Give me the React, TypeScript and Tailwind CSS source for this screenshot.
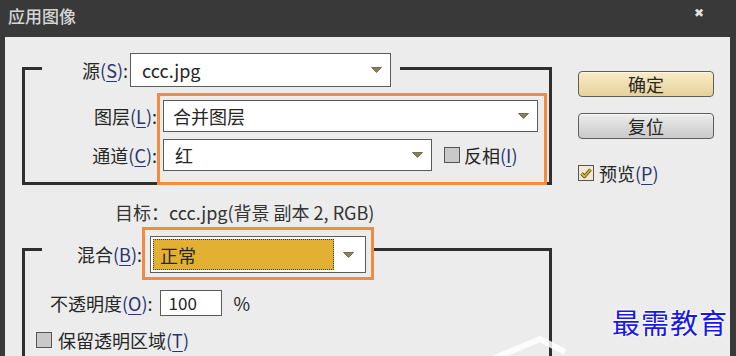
import React from 'react'

const Mn = ({ k }: { k: string }) => (
  <span className="text-[#2b3670]">
    (<span className="underline underline-offset-[3px] decoration-1">{k}</span>)
  </span>
)

const Arrow = () => (
  <svg width="11" height="6" viewBox="0 0 11 6" className="shrink-0">
    <polygon points="0.5,0.5 10.5,0.5 5.5,5.5" fill="#8a8158" stroke="#5f5a3e" strokeWidth="0.8" />
  </svg>
)

const Select = ({ value, className, pad = 'pl-[11px]' }: { value: string; className: string; pad?: string }) => (
  <div className={`flex items-center bg-white border border-[#5b5b5b] pr-[8px] ${className}`}>
    <span className={`flex-1 ${pad}`}>{value}</span>
    <Arrow />
  </div>
)

const Box = ({ checked }: { checked?: boolean }) => (
  <div
    className={`w-[16px] h-[16px] border border-[#555] flex items-center justify-center shrink-0 ${
      checked ? 'bg-[#f1ead0]' : 'bg-[#c9c9c9]'
    }`}
  >
    {checked && (
      <svg width="12" height="11" viewBox="0 0 12 11">
        <path d="M1.5 5.5 L4.5 8.5 L10.5 1.5" fill="none" stroke="#4d4520" strokeWidth="3.4" strokeLinejoin="round" />
        <path d="M1.5 5.5 L4.5 8.5 L10.5 1.5" fill="none" stroke="#d9b934" strokeWidth="1.8" strokeLinejoin="round" />
      </svg>
    )}
  </div>
)

const Line = ({ className }: { className: string }) => <div className={`h-[3px] bg-[#2f2f2f] self-start ${className}`} />

export default function App() {
  return (
    <div className="relative w-[736px] h-[356px] overflow-hidden bg-[#393939] font-['Noto_Sans_CJK_SC',sans-serif] text-[18px] leading-[22px] text-[#262626]">
      {/* title bar */}
      <div className="h-[37px] flex items-center justify-between pl-[8px] pr-[32px]">
        <span className="text-[17px] font-medium text-[#d6d6d6] -mt-[6px]">应用图像</span>
        <span className="text-[12px] text-[#e4e4e4] -mt-[14px]">✖</span>
      </div>

      <div className="flex h-[319px] ml-[5px] mr-[6px] bg-[#ececec]">
        {/* left column */}
        <div className="w-[547px] pl-[17px] pt-[30px] flex flex-col">
          {/* group 1 */}
          <div className="w-[530px] border-x-[3px] border-b-[3px] border-[#2f2f2f]">
            <div className="flex h-[34px] -mt-[14px] -mx-[3px]">
              <Line className="w-[20px] mt-[14px]" />
              <div className="w-[88px] flex items-center justify-end pr-[2px]">
                源<Mn k="S" />:
              </div>
              <Select value="ccc.jpg" className="w-[261px] h-[34px]" />
              <Line className="flex-1 ml-[9px] mt-[14px]" />
            </div>
            <div className="flex mt-[6px]">
              <div className="w-[132px] flex flex-col items-end pt-[7px]">
                <div className="h-[32px] flex items-center">
                  图层<Mn k="L" />:
                </div>
                <div className="h-[32px] flex items-center mt-[7px]">
                  通道<Mn k="C" />:
                </div>
              </div>
              <div className="relative z-10 -mb-[3px] w-[390px] border-[3px] border-[#f48a3d] pl-[3px] pt-[4px] pr-[6px] pb-[11px]">
                <Select value="合并图层" className="w-full h-[32px]" pad="pl-[9px]" />
                <div className="flex items-center mt-[7px]">
                  <Select value="红" className="w-[269px] h-[32px]" />
                  <div className="ml-[12px]">
                    <Box />
                  </div>
                  <span className="ml-[4px]">
                    反相<Mn k="I" />
                  </span>
                </div>
              </div>
            </div>
          </div>

          {/* target */}
          <div className="mt-[16px] ml-[93px] text-[#333]">目标：ccc.jpg(背景 副本 2, RGB)</div>

          {/* group 2 */}
          <div className="w-[530px] h-[200px] mt-[25px] border-x-[3px] border-[#2f2f2f]">
            <div className="flex h-[53px] -mt-[21px] -mx-[3px]">
              <Line className="w-[20px] mt-[21px]" />
              <div className="w-[100px] flex items-center justify-end">
                混合<Mn k="B" />:
              </div>
              <div className="relative z-10 w-[232px] border-[3px] border-[#f48a3d] pl-[5px] pt-[6px]">
                <div className="w-[216px] h-[37px] flex items-center bg-white border border-[#5b5b5b] p-[2px] pr-[11px]">
                  <div className="w-[181px] h-full border border-dotted border-[#3a3a3a] bg-[#e2b133] flex items-center pl-[6px]">
                    正常
                  </div>
                  <div className="flex-1 flex justify-end">
                    <Arrow />
                  </div>
                </div>
              </div>
              <Line className="flex-1 mt-[21px]" />
            </div>

            <div className="flex items-center mt-[10px] pl-[25px]">
              <span>
                不透明度<Mn k="O" />:
              </span>
              <div className="ml-[7px] w-[62px] h-[26px] bg-white border border-[#5b5b5b] flex items-center pl-[8px] text-[17px]">
                100
              </div>
              <span className="ml-[12px]">%</span>
            </div>

            <div className="flex items-center mt-[12px] pl-[11px] h-[24px]">
              <Box />
              <span className="ml-[6px]">
                保留透明区域<Mn k="T" />
              </span>
            </div>
          </div>
        </div>

        {/* right column */}
        <div className="ml-[26px] pt-[34px] w-[136px] flex flex-col">
          <div className="h-[26px] rounded-[4px] border-[1.5px] border-[#5e5e5e] bg-linear-to-b from-[#f8ecc8] to-[#e7d199] shadow-[inset_0_1px_0_#fff8e6] flex items-center justify-center">
            确定
          </div>
          <div className="mt-[16px] h-[26px] rounded-[4px] border-[1.5px] border-[#5e5e5e] bg-linear-to-b from-[#ececec] to-[#c9c9c9] shadow-[inset_0_1px_0_#fafafa] flex items-center justify-center">
            复位
          </div>
          <div className="mt-[23px] flex items-center h-[22px]">
            <Box checked />
            <span className="ml-[5px]">
              预览<Mn k="P" />
            </span>
          </div>
        </div>
      </div>

      {/* watermark */}
      <svg className="absolute left-[470px] top-[330px]" width="120" height="30" viewBox="0 0 120 30">
        <polyline points="20,30 70,9 95,22" fill="none" stroke="#ffffff" strokeOpacity="0.85" strokeWidth="6" />
      </svg>
      <div className="absolute left-[612px] top-[304px] text-[28px] leading-[36px] tracking-[1px] text-[#1818e8] [text-shadow:0_0_2px_#fff,0_0_2px_#fff,0_0_3px_#fff]">
        最需教育
      </div>
    </div>
  )
}
